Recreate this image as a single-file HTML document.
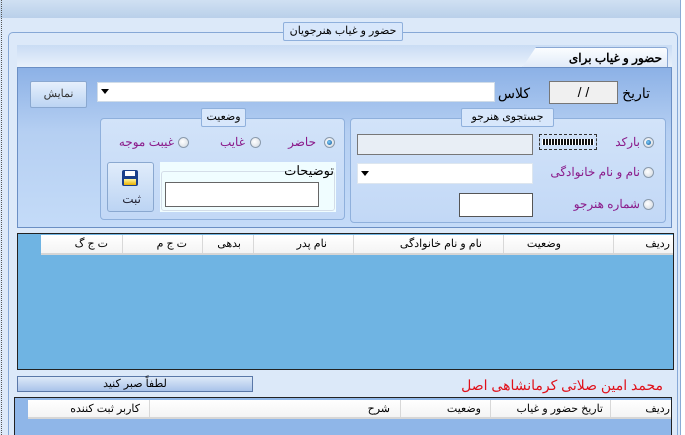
<!DOCTYPE html>
<html style="overflow:hidden;width:685px;height:435px"><head><meta charset="utf-8"><style>
*{box-sizing:border-box;margin:0;padding:0}
body{width:685px;height:435px;overflow:hidden;background:#dce9f9;font-family:Tahoma,"Liberation Sans","Noto Sans CJK SC",sans-serif;font-size:11px;position:relative;direction:ltr}
.a{position:absolute}
.t{position:absolute;white-space:nowrap;direction:rtl}
.rad{position:absolute;width:11px;height:11px;border-radius:50%;border:1px solid #8a9aac;background:radial-gradient(circle at 40% 40%,#fff,#cfd6de)}
.rad.on::after{content:"";position:absolute;left:2px;top:2px;width:5px;height:5px;border-radius:50%;background:radial-gradient(circle at 40% 40%,#7fd0ff,#0a4c8c)}
.hdr{position:absolute;background:linear-gradient(#fff,#f4f4f4);border-bottom:2px solid #d6d6d6}
.col{position:absolute;top:0;bottom:0;border-left:1px solid #d8d8d8}
.gb{position:absolute;border:1px solid #8fb0dc;border-radius:4px;background:linear-gradient(#d2e3f9,#c2d8f6)}
.gt{position:absolute;border:1px solid #8fb0dc;border-radius:2px;background:#d8e7fb;text-align:center;line-height:17px;direction:rtl}
</style></head><body>
<div class="a" style="left:0;top:0;width:685px;height:18px;background:linear-gradient(#d0e0f2,#b9d0ea)"></div>
<div class="a" style="left:1px;top:0;width:1px;height:435px;border-left:1px dotted #555"></div>
<div class="a" style="left:680px;top:0;width:1px;height:435px;background:#8aaad4"></div>
<div class="a" style="left:681px;top:0;width:4px;height:435px;background:#fff"></div>
<div class="a" style="left:8px;top:32px;width:670px;height:403px;border:1px solid #86a8d6;border-bottom:none;border-radius:5px 5px 0 0"></div>
<div class="gt" style="left:283px;top:22px;width:120px;height:19px">حضور و غیاب هنرجویان</div>
<div class="a" style="left:17px;top:45px;width:655px;height:22px;background:linear-gradient(#c9dcf4,#e9f1fb)"></div>
<div class="a" style="left:522px;top:47px;width:146px;height:21px;background:linear-gradient(#fbfdff,#dfeaf8);border:1px solid #8aa8d4;border-bottom:none;border-radius:3px 3px 0 0;clip-path:polygon(14px 0,100% 0,100% 100%,0 100%)"></div>
<div class="t" style="right:23px;top:51px;font-weight:bold;font-size:12px">حضور و غیاب برای</div>
<div class="a" style="left:17px;top:67px;width:655px;height:161px;border:1px solid #6b8fc4;background:linear-gradient(#8cb1e6,#b5cff2 40%,#c4dbf8)"></div>
<div class="t" style="right:35px;top:85px;font-size:14px">تاریخ</div>
<div class="a" style="left:549px;top:81px;width:69px;height:23px;background:#f0f0f0;border:1px solid #777;text-align:center;font-size:14px;line-height:21px">/ /</div>
<div class="t" style="right:155px;top:85px;font-size:14px">کلاس</div>
<div class="a" style="left:97px;top:82px;width:398px;height:20px;background:#fff;border:1px solid #d0dce8"></div>
<div class="a" style="left:101px;top:89px;width:0;height:0;border-left:4px solid transparent;border-right:4px solid transparent;border-top:5px solid #000"></div>
<div class="a" style="left:30px;top:81px;width:57px;height:27px;border:1px solid #8aa8d0;border-radius:2px;background:linear-gradient(#e6f0fc,#bcd4f3);text-align:center;line-height:25px;color:#333">نمایش</div>
<div class="gb" style="left:350px;top:118px;width:316px;height:105px"></div>
<div class="gt" style="left:461px;top:108px;width:93px;height:19px">جستجوی هنرجو</div>
<div class="rad on" style="left:643px;top:137px"></div>
<div class="t" style="right:45px;top:135px;color:#8a1a8a;font-size:12px">بارکد</div>
<div class="a" style="left:539px;top:134px;width:58px;height:16px;border:1px dashed #333;background:repeating-linear-gradient(90deg,#111 0 2px,#fff 2px 3px);background-size:100% 6px;background-position:0 4px;background-repeat:no-repeat;background-clip:content-box;padding:0 2px"></div>
<div class="a" style="left:357px;top:134px;width:176px;height:21px;background:#e8eef5;border:1px solid #777"></div>
<div class="rad" style="left:643px;top:167px"></div>
<div class="t" style="right:45px;top:165px;color:#8a1a8a;font-size:12px">نام و نام خانوادگی</div>
<div class="a" style="left:357px;top:163px;width:176px;height:21px;background:#fff;border:1px solid #dde6ef"></div>
<div class="a" style="left:361px;top:171px;width:0;height:0;border-left:4px solid transparent;border-right:4px solid transparent;border-top:5px solid #000"></div>
<div class="rad" style="left:643px;top:199px"></div>
<div class="t" style="right:45px;top:197px;color:#8a1a8a;font-size:12px">شماره هنرجو</div>
<div class="a" style="left:459px;top:193px;width:74px;height:24px;background:#fff;border:1px solid #555"></div>
<div class="gb" style="left:100px;top:118px;width:245px;height:102px"></div>
<div class="gt" style="left:201px;top:108px;width:45px;height:19px">وضعیت</div>
<div class="rad on" style="left:324px;top:137px"></div>
<div class="t" style="right:369px;top:135px;color:#8a1a8a;font-size:12px">حاضر</div>
<div class="rad" style="left:250px;top:137px"></div>
<div class="t" style="right:440px;top:135px;color:#8a1a8a;font-size:12px">غایب</div>
<div class="rad" style="left:178px;top:137px"></div>
<div class="t" style="right:511px;top:135px;color:#8a1a8a;font-size:12px">غیبت موجه</div>
<div class="a" style="left:107px;top:162px;width:47px;height:50px;border:1px solid #8aa8d0;border-radius:3px;background:linear-gradient(#e0ecfb,#bcd4f3)"></div>
<div class="a" style="left:122px;top:170px;width:16px;height:16px;background:#1a3f8a;border-radius:2px"></div>
<div class="a" style="left:125px;top:171px;width:10px;height:5px;background:#fff"></div>
<div class="a" style="left:124px;top:179px;width:12px;height:6px;background:linear-gradient(#fff6a0,#e8b000)"></div>
<div class="t" style="right:544px;top:192px;font-size:12px;color:#223">ثبت</div>
<div class="a" style="left:160px;top:162px;width:176px;height:50px;background:#f0fdff"></div>
<div class="a" style="left:161px;top:171px;width:174px;height:40px;border:1px solid #d4dde8;border-radius:3px"></div>
<div class="t" style="right:351px;top:163px;font-size:13px">توضیحات</div>
<div class="a" style="left:165px;top:182px;width:154px;height:25px;background:#fff;border:1px solid #666"></div>
<div class="a" style="left:17px;top:233px;width:657px;height:137px;background:#6fb4e3;border:1px solid #222"></div>
<div class="hdr" style="left:41px;top:235px;width:632px;height:20px">
<div class="col" style="left:572px"></div><div class="col" style="left:462px"></div><div class="col" style="left:312px"></div><div class="col" style="left:212px"></div><div class="col" style="left:161px"></div><div class="col" style="left:81px"></div>
</div>
<div class="t" style="right:15px;top:237px">ردیف</div>
<div class="t" style="right:124px;top:237px">وضعیت</div>
<div class="t" style="right:203px;top:237px">نام و نام خانوادگی</div>
<div class="t" style="right:358px;top:237px">نام پدر</div>
<div class="t" style="right:444px;top:237px">بدهی</div>
<div class="t" style="right:498px;top:237px">ت ج م</div>
<div class="t" style="right:577px;top:237px">ت ج گ</div>
<div class="a" style="left:17px;top:376px;width:236px;height:16px;border:1px solid #5a78a8;background:linear-gradient(#dde9f8,#a9c3ea);text-align:center;line-height:14px;direction:rtl">لطفاً صبر کنید</div>
<div class="t" style="right:22px;top:377px;color:#e0101a;font-size:14px">محمد امین صلاتی کرمانشاهی اصل</div>
<div class="a" style="left:14px;top:397px;width:658px;height:38px;background:#8fb6e8;border:1px solid #222;border-bottom:none"></div>
<div class="hdr" style="left:28px;top:400px;width:643px;height:19px">
<div class="col" style="left:582px"></div><div class="col" style="left:462px"></div><div class="col" style="left:372px"></div><div class="col" style="left:121px"></div>
</div>
<div class="t" style="right:15px;top:402px">ردیف</div>
<div class="t" style="right:82px;top:402px">تاریخ حضور و غیاب</div>
<div class="t" style="right:204px;top:402px">وضعیت</div>
<div class="t" style="right:295px;top:402px">شرح</div>
<div class="t" style="right:545px;top:402px">کاربر ثبت کننده</div>
</body></html>
